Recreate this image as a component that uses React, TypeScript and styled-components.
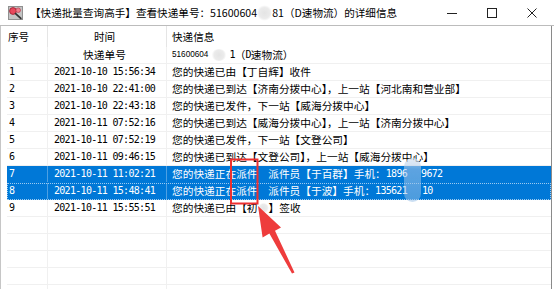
import React from "react";
import styled, { createGlobalStyle, css } from "styled-components";

const GlobalStyle = createGlobalStyle`
  html, body {
    margin: 0;
    padding: 0;
    background: #fff;
  }
  body {
    width: 554px;
    height: 289px;
    overflow: hidden;
    font-family: "Noto Sans CJK SC", "Noto Sans", sans-serif;
    color: #000;
  }
`;

const Window = styled.div`
  position: relative;
  width: 554px;
  height: 289px;
  display: flex;
  flex-direction: column;
  background: #fff;
  overflow: hidden;
`;

const TitleBar = styled.div`
  display: flex;
  align-items: center;
  height: 25px;
  flex-shrink: 0;
  padding-left: 8px;
  border-bottom: 1px solid #bcbcbc;
`;

const TitleText = styled.div`
  flex: 1;
  margin-left: 7px;
  font-size: 10.6px;
  line-height: 25px;
  white-space: nowrap;
  display: flex;
  align-items: center;
`;

const Controls = styled.div`
  display: flex;
  margin-right: 2px;
`;

const ControlButton = styled.div`
  width: 40px;
  height: 25px;
  display: flex;
  align-items: center;
  justify-content: center;
`;

const Body = styled.div`
  flex: 1;
  min-height: 0;
  display: flex;
  border-left: 1px solid #c6c6c6;
  padding-right: 2px;
`;

const List = styled.div`
  flex: 1;
  display: flex;
  flex-direction: column;
  padding-left: 6px;
  border-right: 1px solid #8a8a8a;
  overflow: hidden;
`;

const columns = "41px 119px 1fr";

const Header = styled.div`
  display: grid;
  grid-template-columns: ${columns};
  height: 21px;
  flex-shrink: 0;
`;

const HeaderCell = styled.div<{ $center?: boolean; $last?: boolean }>`
  display: flex;
  align-items: center;
  justify-content: ${(p) => (p.$center ? "center" : "flex-start")};
  padding: ${(p) => (p.$center ? "0 5px 0 0" : p.$last ? "0 0 0 5px" : "0 0 0 1px")};
  font-size: 10.6px;
  border-right: ${(p) => (p.$last ? "none" : "1px solid #e5e5e5")};
  white-space: nowrap;
`;

const Row = styled.div<{ $selected?: boolean; $focused?: boolean }>`
  display: grid;
  grid-template-columns: ${columns};
  height: 17px;
  flex-shrink: 0;
  box-sizing: border-box;
  border-bottom: 1px solid #f0f0f0;
  ${(p) =>
    p.$selected &&
    css`
      background: #0078d7;
      color: #fff;
      border-bottom-color: #0078d7;
    `}
  ${(p) =>
    p.$focused &&
    css`
      outline: 1px dotted #9ccaf0;
      outline-offset: -1px;
    `}
`;

const Cell = styled.div<{ $kind: "num" | "time" | "info"; $selected?: boolean }>`
  display: flex;
  align-items: center;
  white-space: nowrap;
  overflow: hidden;
  line-height: 16px;
  border-right: 1px solid
    ${(p) => (p.$selected ? "rgba(255,255,255,0.3)" : "#f0f0f0")};
  ${(p) =>
    p.$kind === "num" &&
    css`
      padding-left: 2px;
      font-family: "DejaVu Sans Mono", monospace;
      font-size: 10px;
      letter-spacing: -0.7px;
    `}
  ${(p) =>
    p.$kind === "time" &&
    css`
      justify-content: center;
      padding-right: 5px;
      font-family: "DejaVu Sans Mono", monospace;
      font-size: 10px;
      letter-spacing: -0.7px;
    `}
  ${(p) =>
    p.$kind === "info" &&
    css`
      padding-left: 5px;
      font-size: 10.7px;
      border-right: none;
    `}
`;

const Label = styled.span`
  font-family: "Noto Sans CJK SC", sans-serif;
  font-size: 10.7px;
  letter-spacing: 0;
`;

const Mono = styled.span`
  font-family: "DejaVu Sans Mono", monospace;
  font-size: 10px;
  letter-spacing: -0.7px;
`;

const SmallDigits = styled.span`
  font-family: "Liberation Sans", sans-serif;
  font-size: 8.2px;
`;

const Gap = styled.span<{ $w: number }>`
  display: inline-block;
  width: ${(p) => p.$w}px;
`;

const Smudge = styled.span<{ $w: number; $h: number }>`
  display: inline-block;
  width: ${(p) => p.$w}px;
  height: ${(p) => p.$h}px;
  border-radius: 50%;
  background: radial-gradient(
    circle,
    #e4e4e4 0%,
    #ebebeb 50%,
    rgba(245, 245, 245, 0) 72%
  );
`;

const Pill = styled.div`
  position: absolute;
  left: 404px;
  top: 158px;
  width: 17px;
  height: 44px;
  border-radius: 9px;
  background: linear-gradient(
    180deg,
    rgba(215, 228, 242, 0.75) 0%,
    rgba(170, 200, 232, 0.55) 25%,
    rgba(150, 190, 230, 0.5) 100%
  );
  filter: blur(0.6px);
  pointer-events: none;
`;

const Annotation = styled.svg`
  position: absolute;
  left: 0;
  top: 0;
  pointer-events: none;
`;

const AppIcon = () => (
  <svg width="15" height="14" viewBox="0 0 15 14">
    <rect x="0" y="0" width="15" height="14" fill="#c4c4c4" />
    <rect x="0.5" y="0.5" width="14" height="13" fill="none" stroke="#909090" />
    <circle cx="5" cy="5" r="3.4" fill="#e8485c" stroke="#9b1c2c" strokeWidth="0.8" />
    <circle cx="10.2" cy="4.2" r="2.3" fill="#f27d8c" stroke="#a8303e" strokeWidth="0.6" />
    <path d="M7.6 7.6 L12.8 12.4" stroke="#333" strokeWidth="1.8" strokeLinecap="round" />
  </svg>
);

type Item = {
  num: string;
  time: React.ReactNode;
  info: React.ReactNode;
  selected?: boolean;
  focused?: boolean;
};

const items: Item[] = [
  {
    num: "",
    time: <Label>快递单号</Label>,
    info: (
      <>
        <SmallDigits>51600604</SmallDigits>
        <Gap $w={3} />
        <Smudge $w={16} $h={12} />
        <Gap $w={2} />
        <Mono>1</Mono>（<Mono>D</Mono>速物流）
      </>
    ),
  },
  { num: "1", time: "2021-10-10 15:56:34", info: "您的快递已由【丁自辉】收件" },
  { num: "2", time: "2021-10-10 22:41:00", info: "您的快递已到达【济南分拨中心】，上一站【河北南和营业部】" },
  { num: "3", time: "2021-10-10 22:43:18", info: "您的快递已发件，下一站【威海分拨中心】" },
  { num: "4", time: "2021-10-11 07:52:16", info: "您的快递已到达【威海分拨中心】，上一站【济南分拨中心】" },
  { num: "5", time: "2021-10-11 07:52:19", info: "您的快递已发件，下一站【文登公司】" },
  { num: "6", time: "2021-10-11 09:46:15", info: "您的快递已到达【文登公司】，上一站【威海分拨中心】" },
  {
    num: "7",
    time: "2021-10-11 11:02:21",
    info: (
      <>
        您的快递正在派件　派件员【于百群】手机：<Mono>1896</Mono>
        <Gap $w={14} />
        <Mono>9672</Mono>
      </>
    ),
    selected: true,
  },
  {
    num: "8",
    time: "2021-10-11 15:48:41",
    info: (
      <>
        您的快递正在派件　派件员【于波】手机：<Mono>135621</Mono>
        <Gap $w={15} />
        <Mono>10</Mono>
      </>
    ),
    selected: true,
    focused: true,
  },
  {
    num: "9",
    time: "2021-10-11 15:55:51",
    info: (
      <>
        您的快递已由【初
        <Smudge $w={11} $h={10} />
        】签收
      </>
    ),
  },
];

const emptyRows = [0, 1, 2, 3, 4];

export default function App() {
  return (
    <>
      <GlobalStyle />
      <Window>
        <TitleBar>
          <AppIcon />
          <TitleText>
            【快递批量查询高手】查看快递单号：51600604
            <Smudge $w={15} $h={16} />
            81（D速物流）的详细信息
          </TitleText>
          <Controls>
            <ControlButton>
              <svg width="10" height="10" viewBox="0 0 10 10">
                <path d="M0 5.5 H10" stroke="#222" strokeWidth="1" />
              </svg>
            </ControlButton>
            <ControlButton>
              <svg width="10" height="10" viewBox="0 0 10 10">
                <rect x="0.5" y="0.5" width="9" height="9" fill="none" stroke="#222" strokeWidth="1" />
              </svg>
            </ControlButton>
            <ControlButton>
              <svg width="10" height="10" viewBox="0 0 10 10">
                <path d="M0.5 0.5 L9.5 9.5 M9.5 0.5 L0.5 9.5" stroke="#222" strokeWidth="1" />
              </svg>
            </ControlButton>
          </Controls>
        </TitleBar>

        <Body>
          <List>
            <Header>
              <HeaderCell>序号</HeaderCell>
              <HeaderCell $center>时间</HeaderCell>
              <HeaderCell $last>快递信息</HeaderCell>
            </Header>
            {items.map((it, i) => (
              <Row key={i} $selected={it.selected} $focused={it.focused}>
                <Cell $kind="num" $selected={it.selected}>{it.num}</Cell>
                <Cell $kind="time" $selected={it.selected}>{it.time}</Cell>
                <Cell $kind="info" $selected={it.selected}>{it.info}</Cell>
              </Row>
            ))}
            {emptyRows.map((i) => (
              <Row key={`e${i}`}>
                <Cell $kind="num" />
                <Cell $kind="time" />
                <Cell $kind="info" />
              </Row>
            ))}
          </List>
        </Body>

        <Pill />
        <Annotation width="554" height="289" viewBox="0 0 554 289">
          <rect x="231" y="159.5" width="26.5" height="44" fill="none" stroke="#ec3030" strokeWidth="2" />
          <polygon
            points="258,206 281,227.5 275,230.8 294.5,272.5 292,273.6 269.4,233.6 262.6,237.4"
            fill="#ee3c3c"
          />
        </Annotation>
      </Window>
    </>
  );
}
